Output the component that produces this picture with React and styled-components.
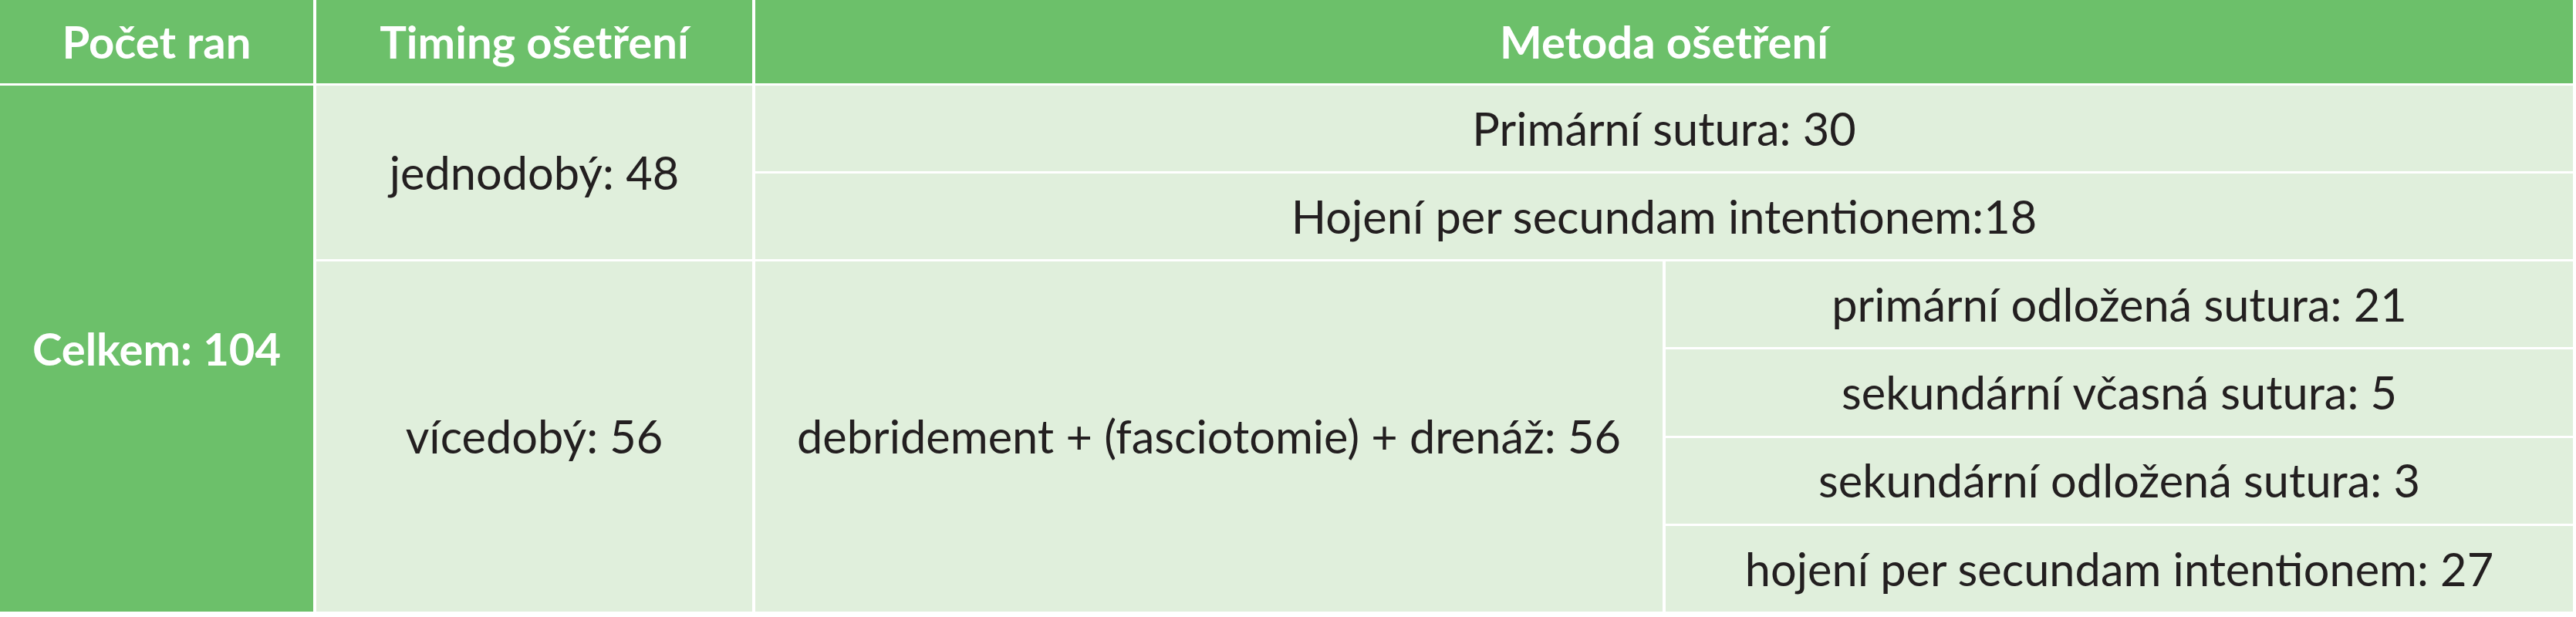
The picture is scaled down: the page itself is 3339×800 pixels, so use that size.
import React from "react";
import styled, { createGlobalStyle, css } from "styled-components";

const GREEN = "#6cc06a";
const LIGHT = "#e0efdc";

const GlobalStyle = createGlobalStyle`
  html, body {
    margin: 0;
    padding: 0;
    background: #ffffff;
  }
  body {
    font-family: "Lato", "Open Sans", sans-serif;
  }
`;

const Table = styled.div`
  display: grid;
  grid-template-columns: 406px 565px 1176px 1176px;
  grid-template-rows: 108px repeat(6, 1fr);
  gap: 3px 4px;
  width: 3335px;
  height: 793px;
  background: #ffffff;
`;

const Cell = styled.div`
  grid-column: ${(props) => props.$col};
  grid-row: ${(props) => props.$row};
  display: flex;
  align-items: center;
  justify-content: center;
  text-align: center;
  white-space: nowrap;
  font-size: 59.5px;
  line-height: 1;
  background: ${LIGHT};
  color: #231f20;
  font-weight: 400;

  ${(props) =>
    props.$accent &&
    css`
      background: ${GREEN};
      color: #ffffff;
      font-size: 58px;
      font-weight: 700;
    `}
`;

const cells = [
  { col: "1", row: "1", text: "Počet ran", accent: true },
  { col: "2", row: "1", text: "Timing ošetření", accent: true },
  { col: "3 / span 2", row: "1", text: "Metoda ošetření", accent: true },

  { col: "1", row: "2 / span 6", text: "Celkem: 104", accent: true },

  { col: "2", row: "2 / span 2", text: "jednodobý: 48" },
  { col: "3 / span 2", row: "2", text: "Primární sutura: 30" },
  { col: "3 / span 2", row: "3", text: "Hojení per secundam intentionem:18" },

  { col: "2", row: "4 / span 4", text: "vícedobý: 56" },
  { col: "3", row: "4 / span 4", text: "debridement + (fasciotomie) + drenáž: 56" },
  { col: "4", row: "4", text: "primární odložená sutura: 21" },
  { col: "4", row: "5", text: "sekundární včasná sutura: 5" },
  { col: "4", row: "6", text: "sekundární odložená sutura: 3" },
  { col: "4", row: "7", text: "hojení per secundam intentionem: 27" },
];

const App = () => (
  <>
    <GlobalStyle />
    <Table>
      {cells.map((cell, index) => (
        <Cell key={index} $col={cell.col} $row={cell.row} $accent={cell.accent}>
          {cell.text}
        </Cell>
      ))}
    </Table>
  </>
);

export default App;
